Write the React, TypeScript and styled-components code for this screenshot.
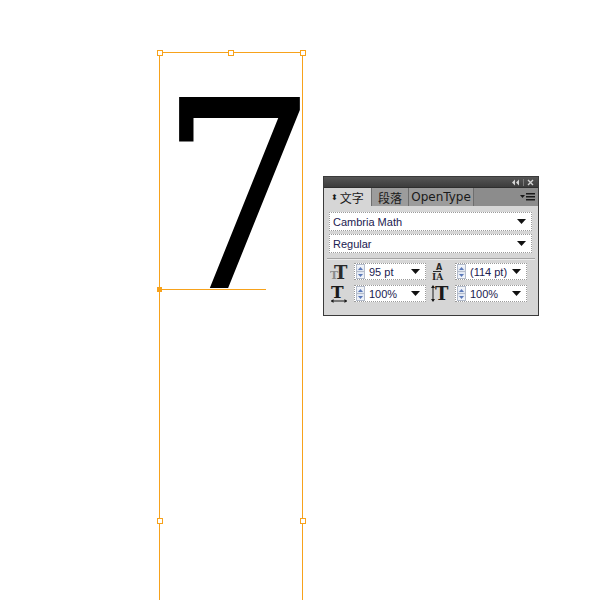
import styled, { createGlobalStyle } from 'styled-components';

const GlobalStyle = createGlobalStyle`
  html, body {
    margin: 0;
    padding: 0;
    background: #ffffff;
  }
  #root {
    width: 600px;
    height: 600px;
  }
`;

const ORANGE = '#f7a21b';

function Spinner() {
  return (
    <SpinBox>
      <SpinHalf>
        <svg width="5" height="3" viewBox="0 0 5 3">
          <path d="M0 3 L2.5 0 L5 3 Z" fill="#5a78b8" />
        </svg>
      </SpinHalf>
      <SpinHalf $bottom>
        <svg width="5" height="3" viewBox="0 0 5 3">
          <path d="M0 0 L2.5 3 L5 0 Z" fill="#5a78b8" />
        </svg>
      </SpinHalf>
    </SpinBox>
  );
}

function DropArrow() {
  return (
    <ArrowWrap>
      <svg width="9" height="5" viewBox="0 0 9 5">
        <path d="M0 0 L9 0 L4.5 5 Z" fill="#111" />
      </svg>
    </ArrowWrap>
  );
}

function SizeIcon() {
  return (
    <svg width="18" height="17" viewBox="0 0 18 17">
      <text x="0" y="16" fontFamily="DejaVu Serif" fontWeight="bold" fontSize="11" fill="#8a8a8a">
        T
      </text>
      <text x="4" y="16" fontFamily="DejaVu Serif" fontWeight="bold" fontSize="18" fill="#2a2a2a">
        T
      </text>
    </svg>
  );
}

function LeadingIcon() {
  return (
    <svg width="18" height="19" viewBox="0 0 18 19">
      <text x="5" y="8" fontFamily="DejaVu Sans" fontWeight="bold" fontSize="8" fill="#2a2a2a">
        A
      </text>
      <text x="1" y="18" fontFamily="DejaVu Serif" fontWeight="bold" fontSize="9" fill="#2a2a2a">
        IA
      </text>
      <path d="M2 9.5 L10 9.5" stroke="#2a2a2a" strokeWidth="1" />
    </svg>
  );
}

function HScaleIcon() {
  return (
    <svg width="18" height="19" viewBox="0 0 18 19">
      <text x="1" y="14" fontFamily="DejaVu Serif" fontWeight="bold" fontSize="17" fill="#1a1a1a">
        T
      </text>
      <path d="M1 17 L17 17" stroke="#1a1a1a" strokeWidth="1" />
      <path d="M1 17 L3.5 15 L3.5 19 Z M17 17 L14.5 15 L14.5 19 Z" fill="#1a1a1a" />
    </svg>
  );
}

function VScaleIcon() {
  return (
    <svg width="18" height="19" viewBox="0 0 18 19">
      <path d="M2 2 L2 17" stroke="#1a1a1a" strokeWidth="1" />
      <path d="M2 1 L0 4 L4 4 Z M2 18 L0 15 L4 15 Z" fill="#1a1a1a" />
      <text x="4" y="16" fontFamily="DejaVu Serif" fontWeight="bold" fontSize="18" fill="#1a1a1a">
        T
      </text>
    </svg>
  );
}

export default function App() {
  return (
    <>
      <GlobalStyle />
      <Canvas>
        <TextFrame>
          <Handle $left="-3px" $top="-3px" />
          <Handle $left="68px" $top="-3px" />
          <Handle $left="140px" $top="-3px" />
          <Handle $left="-3px" $top="465px" />
          <Handle $left="140px" $top="465px" />
          <Glyph>7</Glyph>
          <Baseline>
            <BaseDot />
          </Baseline>
        </TextFrame>

        <Panel>
          <TitleBar>
            <svg width="22" height="7" viewBox="0 0 22 7">
              <path d="M0 3.5 L3 0.5 L3 6.5 Z M4 3.5 L7 0.5 L7 6.5 Z" fill="#d4d4d4" />
              <rect x="11" y="0" width="1" height="7" fill="#7a7a7a" />
              <path d="M16 1 L21 6 M21 1 L16 6" stroke="#d4d4d4" strokeWidth="1.4" />
            </svg>
          </TitleBar>
          <TabRow>
            <Tab $active $width={48}>
              <TabArrows>⬍</TabArrows>文字
            </Tab>
            <Tab $width={37}>段落</Tab>
            <Tab $width={65}>OpenType</Tab>
            <MenuButton>
              <svg width="15" height="8" viewBox="0 0 15 8">
                <path d="M0 2 L5 2 L2.5 5 Z" fill="#1a1a1a" />
                <rect x="6" y="0" width="9" height="1.5" fill="#1a1a1a" />
                <rect x="6" y="3" width="9" height="1.5" fill="#1a1a1a" />
                <rect x="6" y="6" width="9" height="1.5" fill="#1a1a1a" />
              </svg>
            </MenuButton>
          </TabRow>
          <Body>
            <Select>
              <SelectText>Cambria Math</SelectText>
              <DropArrow />
            </Select>
            <Select>
              <SelectText>Regular</SelectText>
              <DropArrow />
            </Select>
            <Separator />
            <Grid>
              <Field>
                <IconCell>
                  <SizeIcon />
                </IconCell>
                <SpinField>
                  <Spinner />
                  <SpinValue>95 pt</SpinValue>
                  <DropArrow />
                </SpinField>
              </Field>
              <Field>
                <IconCell>
                  <LeadingIcon />
                </IconCell>
                <SpinField>
                  <Spinner />
                  <SpinValue>(114 pt)</SpinValue>
                  <DropArrow />
                </SpinField>
              </Field>
              <Field>
                <IconCell>
                  <HScaleIcon />
                </IconCell>
                <SpinField>
                  <Spinner />
                  <SpinValue>100%</SpinValue>
                  <DropArrow />
                </SpinField>
              </Field>
              <Field>
                <IconCell>
                  <VScaleIcon />
                </IconCell>
                <SpinField>
                  <Spinner />
                  <SpinValue>100%</SpinValue>
                  <DropArrow />
                </SpinField>
              </Field>
            </Grid>
          </Body>
        </Panel>
      </Canvas>
    </>
  );
}

const Canvas = styled.div`
  position: relative;
  width: 600px;
  height: 600px;
  overflow: hidden;
  background: #ffffff;
`;

const TextFrame = styled.div`
  position: absolute;
  left: 159px;
  top: 52px;
  width: 142px;
  height: 560px;
  border-top: 1px solid ${ORANGE};
  border-left: 1px solid ${ORANGE};
  border-right: 1px solid ${ORANGE};
`;

const Handle = styled.div<{ $left: string; $top: string }>`
  position: absolute;
  left: ${(p) => p.$left};
  top: ${(p) => p.$top};
  width: 4px;
  height: 4px;
  border: 1px solid ${ORANGE};
  background: #ffffff;
  z-index: 2;
`;

const Glyph = styled.div`
  position: absolute;
  left: -2px;
  top: 14px;
  font-family: 'DejaVu Serif', serif;
  font-size: 262px;
  line-height: 1;
  color: #000;
  transform: scaleX(0.96);
  transform-origin: left top;
`;

const Baseline = styled.div`
  position: absolute;
  left: -1px;
  top: 236px;
  width: 107px;
  height: 1px;
  background: ${ORANGE};
`;

const BaseDot = styled.div`
  position: absolute;
  left: -2px;
  top: -2px;
  width: 5px;
  height: 5px;
  background: ${ORANGE};
`;

const Panel = styled.div`
  position: absolute;
  left: 323px;
  top: 176px;
  width: 214px;
  height: 138px;
  border: 1px solid #3a3a3a;
  background: #d6d6d6;
  display: flex;
  flex-direction: column;
  font-family: 'Liberation Sans', 'Noto Sans CJK SC', sans-serif;
`;

const TitleBar = styled.div`
  height: 10px;
  background: linear-gradient(#565656, #3c3c3c);
  display: flex;
  justify-content: flex-end;
  align-items: center;
  padding-right: 4px;
`;

const TabRow = styled.div`
  height: 18px;
  background: #8c8c8c;
  display: flex;
  align-items: stretch;
  border-top: 1px solid #2e2e2e;
`;

const Tab = styled.div<{ $active?: boolean; $width: number }>`
  width: ${(p) => p.$width}px;
  box-sizing: border-box;
  display: flex;
  align-items: center;
  justify-content: center;
  font-size: 12px;
  color: #1a1a1a;
  background: ${(p) => (p.$active ? '#d6d6d6' : '#9c9c9c')};
  border-right: 1px solid #6e6e6e;
  font-family: 'DejaVu Sans', 'Noto Sans CJK SC', sans-serif;
  white-space: nowrap;
`;

const TabArrows = styled.span`
  font-size: 8px;
  margin-right: 2px;
`;

const MenuButton = styled.div`
  margin-left: auto;
  display: flex;
  align-items: center;
  padding-right: 3px;
`;

const Body = styled.div`
  flex: 1;
  padding: 6px 6px 0 5px;
  display: flex;
  flex-direction: column;
  gap: 3px;
`;

const Select = styled.div`
  height: 19px;
  box-sizing: border-box;
  background: #ffffff;
  border: 1px dotted #9a9a9a;
  display: flex;
  align-items: center;
  padding-left: 3px;
`;

const SelectText = styled.span`
  flex: 1;
  font-size: 11px;
  color: #1b2150;
  white-space: nowrap;
`;

const ArrowWrap = styled.div`
  display: flex;
  align-items: center;
  padding-right: 5px;
`;

const Separator = styled.div`
  height: 1px;
  background: #a4a4a4;
  border-bottom: 1px solid #ececec;
  margin: 2px -3px 0 -2px;
`;

const Grid = styled.div`
  display: grid;
  grid-template-columns: 101px 101px;
  row-gap: 5px;
`;

const Field = styled.div`
  display: flex;
  align-items: center;
  height: 17px;
`;

const IconCell = styled.div`
  width: 24px;
  height: 17px;
  display: flex;
  align-items: center;
  justify-content: flex-start;
  padding-left: 1px;
`;

const SpinField = styled.div`
  width: 72px;
  height: 17px;
  box-sizing: border-box;
  background: #ffffff;
  border: 1px dotted #9a9a9a;
  display: flex;
  align-items: center;
`;

const SpinBox = styled.div`
  width: 9px;
  height: 15px;
  margin-left: 1px;
  margin-right: 4px;
  display: flex;
  flex-direction: column;
  border: 1px solid #b4bccb;
  box-sizing: border-box;
`;

const SpinHalf = styled.div<{ $bottom?: boolean }>`
  flex: 1;
  display: flex;
  align-items: center;
  justify-content: center;
  background: ${(p) =>
    p.$bottom ? 'linear-gradient(#dfe6f2, #f4f6fa)' : 'linear-gradient(#f4f6fa, #dfe6f2)'};
  border-top: ${(p) => (p.$bottom ? '1px solid #b4bccb' : 'none')};
`;

const SpinValue = styled.span`
  flex: 1;
  font-size: 11px;
  color: #1b2150;
  white-space: nowrap;
`;
